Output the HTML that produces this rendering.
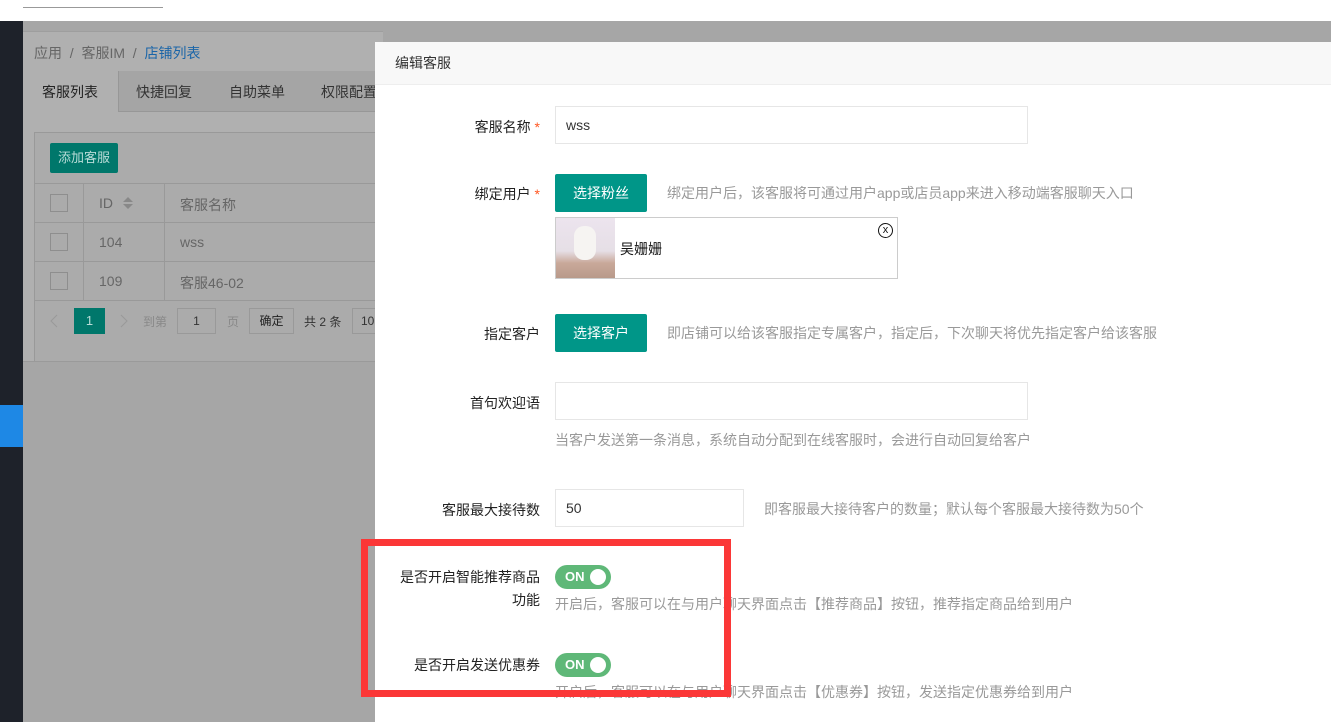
<!DOCTYPE html>
<html><head><meta charset="utf-8"><style>
*{box-sizing:border-box;margin:0;padding:0}
body{width:1331px;height:722px;overflow:hidden;position:relative;font-family:"Liberation Sans","Noto Sans CJK SC",sans-serif;font-size:14px;background:#a6a6a6;color:#333}
.abs{position:absolute}
.top{left:0;top:0;width:1331px;height:21px;background:#fff}
.side{left:0;top:21px;width:23px;height:701px;background:#1e222a}
.main{left:23px;top:21px;width:360px;height:701px;background:#a6a6a6}
.g{color:#666}
.modal{left:375px;top:42px;width:956px;height:680px;background:#fff}
.mh{height:43px;background:#f8f8f8;border-bottom:1px solid #eee;padding-left:20px;line-height:43px;color:#333}
.lbl{width:165px;text-align:right;color:#222}
.inp{border:1px solid #e6e6e6;background:#fff;height:38px;line-height:36px;padding-left:10px;color:#333}
.btn{background:#009688;color:#fff;height:38px;line-height:38px;text-align:center;border-radius:2px;width:92px}
.tip{color:#999}
.sw{width:56px;height:24px;border-radius:12px;background:#5fb878;color:#fff;font-size:13px;font-weight:bold;line-height:24px;padding-left:10px}
.sw:after{content:"";position:absolute;right:5px;top:4px;width:16px;height:16px;border-radius:50%;background:#fff}
.star{color:#ff5722}
</style></head><body>
<div class="abs top"><div class="abs" style="left:23px;top:7px;width:140px;height:1px;background:#999"></div></div>
<div class="abs side"><div class="abs" style="left:0;top:384px;width:23px;height:42px;background:#1e88e5"></div></div>
<div class="abs main">
  <div class="abs" style="left:0;top:10px;width:360px;height:331px;background:#b0b0b0"></div>
  <div class="abs" style="left:0;top:10px;width:360px;height:1px;background:#9e9e9e"></div>
  <div class="abs g" style="left:11px;top:22px">应用 &nbsp;/&nbsp; 客服IM &nbsp;/&nbsp; <span style="color:#1a65a8">店铺列表</span></div>
  <div class="abs" style="left:95px;top:50px;width:265px;height:41px;background:#a5a5a5;border-left:1px solid #979797;border-bottom:1px solid #979797"></div>
  <div class="abs" style="left:19px;top:61px;color:#222">客服列表</div>
  <div class="abs" style="left:113px;top:61px;color:#333">快捷回复</div>
  <div class="abs" style="left:206px;top:61px;color:#333">自助菜单</div>
  <div class="abs" style="left:298px;top:61px;color:#333">权限配置</div>
  <div class="abs" style="left:11px;top:111px;width:349px;height:230px;background:#ababab;border:1px solid #999"></div>
  <div class="abs" style="left:27px;top:122px;width:68px;height:30px;background:#00776b;color:#b9dcd8;font-size:13px;line-height:30px;text-align:center;border-radius:2px">添加客服</div>
  <div class="abs" style="left:11px;top:162px;width:349px;height:117px;border-top:1px solid #999"></div>
  <div class="abs" style="left:11px;top:201px;width:349px;height:1px;background:#999"></div>
  <div class="abs" style="left:11px;top:240px;width:349px;height:1px;background:#999"></div>
  <div class="abs" style="left:11px;top:279px;width:349px;height:1px;background:#999"></div>
  <div class="abs" style="left:60px;top:162px;width:1px;height:117px;background:#999"></div>
  <div class="abs" style="left:141px;top:162px;width:1px;height:117px;background:#999"></div>
  <div class="abs" style="left:27px;top:173px;width:18px;height:18px;border:1px solid #8e8e8e"></div>
  <div class="abs" style="left:27px;top:212px;width:18px;height:18px;border:1px solid #8e8e8e"></div>
  <div class="abs" style="left:27px;top:251px;width:18px;height:18px;border:1px solid #8e8e8e"></div>
  <div class="abs g" style="left:76px;top:174px">ID</div>
  <svg class="abs" style="left:99px;top:175px" width="12" height="14"><path d="M1 6 L6 1 L11 6Z M1 8 L6 13 L11 8Z" fill="#888"/></svg>
  <div class="abs g" style="left:157px;top:174px">客服名称</div>
  <div class="abs g" style="left:76px;top:213px">104</div>
  <div class="abs g" style="left:157px;top:213px">wss</div>
  <div class="abs g" style="left:76px;top:252px">109</div>
  <div class="abs g" style="left:157px;top:252px">客服46-02</div>
  <svg class="abs" style="left:26px;top:292px" width="10" height="16"><path d="M8 2 L2 8 L8 14" stroke="#999" fill="none"/></svg>
  <div class="abs" style="left:51px;top:287px;width:31px;height:26px;background:#00776b;color:#b9dcd8;text-align:center;line-height:26px;font-size:13px">1</div>
  <svg class="abs" style="left:96px;top:292px" width="10" height="16"><path d="M2 2 L8 8 L2 14" stroke="#999" fill="none"/></svg>
  <div class="abs" style="left:120px;top:292px;color:#888;font-size:12px">到第</div>
  <div class="abs" style="left:154px;top:287px;width:39px;height:26px;border:1px solid #999;text-align:center;line-height:24px;font-size:12px">1</div>
  <div class="abs" style="left:204px;top:292px;color:#888;font-size:12px">页</div>
  <div class="abs" style="left:226px;top:287px;width:45px;height:26px;border:1px solid #999;text-align:center;line-height:24px;font-size:12px;color:#222">确定</div>
  <div class="abs" style="left:281px;top:292px;color:#333;font-size:12px">共 2 条</div>
  <div class="abs" style="left:329px;top:287px;width:31px;height:26px;border:1px solid #999;line-height:24px;font-size:12px;padding-left:8px">10</div>
  <div class="abs" style="left:0;top:340px;width:360px;height:1px;background:#9a9a9a"></div>
</div>
<div class="abs modal">
  <div class="mh">编辑客服</div>
  <div class="abs lbl" style="left:0;top:75px">客服名称 <span class="star">*</span></div>
  <div class="abs inp" style="left:180px;top:64px;width:473px">wss</div>
  <div class="abs lbl" style="left:0;top:142px">绑定用户 <span class="star">*</span></div>
  <div class="abs btn" style="left:180px;top:132px">选择粉丝</div>
  <div class="abs tip" style="left:292px;top:141px">绑定用户后，该客服将可通过用户app或店员app来进入移动端客服聊天入口</div>
  <div class="abs" style="left:180px;top:175px;width:343px;height:62px;border:1px solid #ccc">
    <div class="abs" style="left:0;top:0;width:59px;height:60px;background:linear-gradient(180deg,#ece4ee 0%,#e6dfe6 55%,#c9a99a 75%,#b89a8a 100%)"><div class="abs" style="left:18px;top:8px;width:22px;height:34px;border-radius:10px;background:#f6f4f2"></div></div>
    <div class="abs" style="left:64px;top:21px;color:#111">吴姗姗</div>
    <div class="abs" style="left:322px;top:5px;width:15px;height:15px;border:1px solid #111;border-radius:50%;font-size:11px;line-height:12px;text-align:center;color:#111">x</div>
  </div>
  <div class="abs lbl" style="left:0;top:282px">指定客户</div>
  <div class="abs btn" style="left:180px;top:272px">选择客户</div>
  <div class="abs tip" style="left:292px;top:281px">即店铺可以给该客服指定专属客户，指定后，下次聊天将优先指定客户给该客服</div>
  <div class="abs lbl" style="left:0;top:351px">首句欢迎语</div>
  <div class="abs inp" style="left:180px;top:340px;width:473px"></div>
  <div class="abs tip" style="left:180px;top:388px">当客户发送第一条消息，系统自动分配到在线客服时，会进行自动回复给客户</div>
  <div class="abs lbl" style="left:0;top:458px">客服最大接待数</div>
  <div class="abs inp" style="left:180px;top:447px;width:189px">50</div>
  <div class="abs tip" style="left:389px;top:457px">即客服最大接待客户的数量；默认每个客服最大接待数为50个</div>
  <div class="abs lbl" style="left:0;top:524px;line-height:23px">是否开启智能推荐商品<br>功能</div>
  <div class="abs sw" style="left:180px;top:523px">ON</div>
  <div class="abs tip" style="left:180px;top:552px">开启后，客服可以在与用户聊天界面点击【推荐商品】按钮，推荐指定商品给到用户</div>
  <div class="abs lbl" style="left:0;top:613px">是否开启发送优惠券</div>
  <div class="abs sw" style="left:180px;top:611px">ON</div>
  <div class="abs tip" style="left:180px;top:640px">开启后，客服可以在与用户聊天界面点击【优惠券】按钮，发送指定优惠券给到用户</div>
</div>
<div class="abs" style="left:361px;top:539px;width:370px;height:158px;border:7px solid #fb3737"></div>
</body></html>
